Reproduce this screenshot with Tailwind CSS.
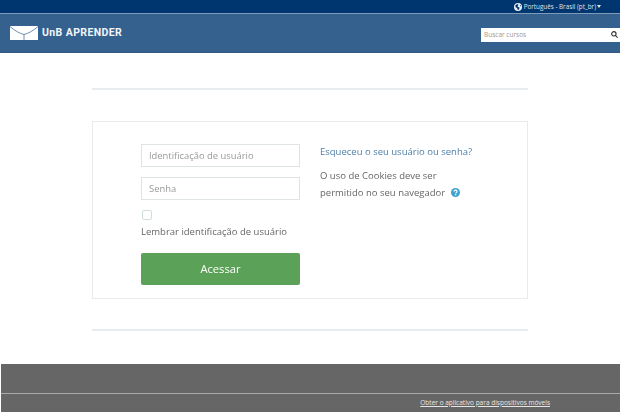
<!DOCTYPE html>
<html lang="pt-BR">

<head>
    <meta charset="UTF-8">
    <meta name="viewport" content="width=device-width, initial-scale=1.0">
    <title>UnB Aprender</title>
    <script src="https://cdn.jsdelivr.net/npm/@tailwindcss/browser@4"></script>
</head>

<body class="h-[412px] w-[620px] overflow-hidden bg-white font-['Open_Sans',sans-serif]">
    <div class="h-full flex flex-col blur-[0.5px]">
        <!-- top bar -->
        <div class="h-[13px] bg-[#003670] flex items-center justify-end pr-[19px] text-[6.3px] text-[#dfe6ee]">
            <svg class="w-[8px] h-[8px] mr-[1.500px]" viewBox="0 0 16 16">
                <circle cx="8" cy="8" r="8" fill="#e8edf3" />
                <path d="M3 4l4-2 2 2-2 2 1 2 3 1-1 4-2 1-2-4-3-2zM12 3l2 3-2 1z" fill="#003670" />
            </svg>
            <span>Português - Brasil (pt_br)</span>
            <span class="ml-[1px] border-x-[2.5px] border-x-transparent border-t-[3px] border-t-[#dfe6ee]"></span>
        </div>

        <!-- header -->
        <header class="h-[40px] bg-[#35618f] border-t border-t-[#7f9ab8] border-b border-b-[#2f5a88] flex items-center justify-between">
            <div class="flex items-center pl-[10px]">
                <svg class="w-[28px] h-[14px]" viewBox="0 0 28 14">
                    <rect width="28" height="14" fill="#fff" />
                    <path d="M0 0.500C5 5 10 7.500 14 8.500C18 7.500 23 5 28 0.500M14 8.500V14" fill="none" stroke="#6f8fb2" stroke-width="1" />
                </svg>
                <span class="ml-[4px] font-['Roboto',sans-serif] font-bold text-[10.5px] tracking-[0.4px] text-[#f2f5f8]">UnB APRENDER</span>
            </div>
            <div class="w-[139px] h-[14px] mt-[3px] bg-white flex items-center justify-between pl-[3px] pr-[2px] text-[6.5px] text-[#9a9a9a]">
                <span>Buscar cursos</span>
                <svg class="w-[7px] h-[7px]" viewBox="0 0 16 16" fill="none" stroke="#333" stroke-width="2.6">
                    <circle cx="6.5" cy="6.5" r="5" />
                    <path d="M10 10l5 5" />
                </svg>
            </div>
        </header>

        <main class="flex-1 flex flex-col pl-[92px]">
            <div class="mt-[35px] h-[2px] w-[436px] bg-[#e9ecef]"></div>

            <!-- login card -->
            <div class="mt-[31px] w-[436px] h-[178px] border border-[#e8eaec] flex pl-[48px] pt-[22px]">
                <div class="w-[159px]">
                    <div class="h-[23px] border border-[#dee4e6] flex items-center pl-[7px] pt-[2px] text-[9.4px] text-[#9a9a9a]">Identificação de usuário</div>
                    <div class="mt-[10px] h-[23px] border border-[#dee4e6] flex items-center pl-[7px] pt-[2px] text-[9.4px] text-[#9a9a9a]">Senha</div>
                    <div class="mt-[10px] w-[10px] h-[10px] ml-[1px] border border-[#cfdcdc] rounded-[2px]"></div>
                    <div class="mt-[5px] text-[9.5px] leading-[14px] text-[#666] whitespace-nowrap">Lembrar identificação de usuário</div>
                    <div class="mt-[14px] h-[32px] rounded-[2px] bg-[#5ba158] flex items-center justify-center text-[11.2px] text-white">Acessar</div>
                </div>
                <div class="ml-[20px] pt-[1px] text-[9.5px]">
                    <a class="block text-[#4d7fa8]">Esqueceu o seu usuário ou senha?</a>
                    <p class="mt-[8px] leading-[17px] text-[#666]">O uso de Cookies deve ser<br>
                        <span class="inline-flex items-center">permitido no seu navegador
                            <svg class="ml-[6px] w-[9px] h-[9px]" viewBox="0 0 16 16">
                                <circle cx="8" cy="8" r="8" fill="#3fa3d1" />
                                <path d="M5.2 6.2C5.4 4.5 6.6 3.8 8 3.8c1.600 0 2.800.9 2.800 2.300 0 2-2.300 1.900-2.300 3.700" fill="none" stroke="#fff" stroke-width="2" />
                                <rect x="7" y="11" width="2.200" height="2.200" fill="#fff" />
                            </svg>
                        </span>
                    </p>
                </div>
            </div>

            <div class="mt-[30px] h-[2px] w-[436px] bg-[#e9ecef]"></div>
        </main>

        <!-- footer -->
        <footer class="ml-[1px] h-[48px] bg-[#666666]">
            <div class="h-[29px] border-b border-b-[#a9a9a9] box-content"></div>
            <div class="flex justify-end pr-[70px] pt-[4px] text-[6.5px] text-[#e6e6e6] underline">Obter o aplicativo para dispositivos móveis</div>
        </footer>
    </div>
</body>

</html>
